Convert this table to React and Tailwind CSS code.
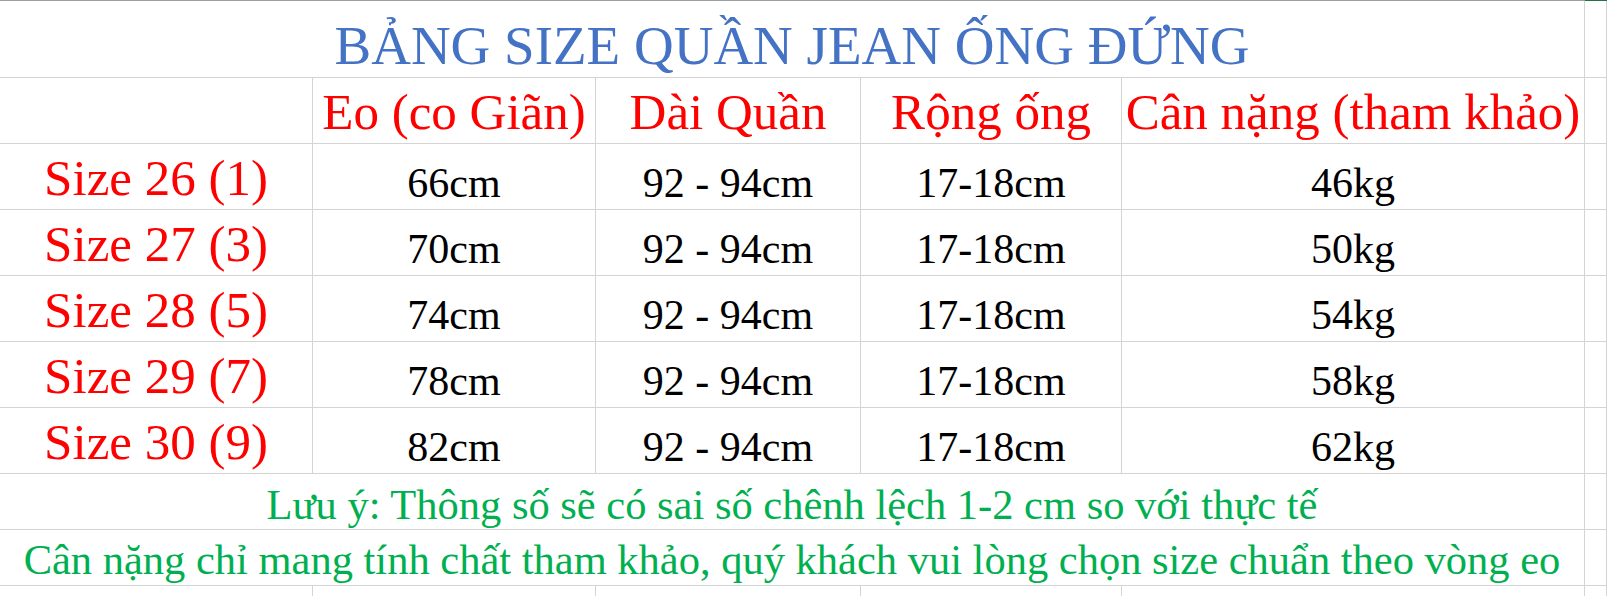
import React from 'react';

// Excel-style size chart, Times New Roman widths via Liberation Serif
const ROWS = [
  { size: 'Size 26 (1)', eo: '66cm', kg: '46kg' },
  { size: 'Size 27 (3)', eo: '70cm', kg: '50kg' },
  { size: 'Size 28 (5)', eo: '74cm', kg: '54kg' },
  { size: 'Size 29 (7)', eo: '78cm', kg: '58kg' },
  { size: 'Size 30 (9)', eo: '82cm', kg: '62kg' },
];

const cell = 'border-r border-b border-[#d4d4d4] flex items-end justify-center leading-none whitespace-nowrap';

export default function App() {
  return (
    <div className="w-[1607px] h-[596px] overflow-hidden bg-white" style={{ fontFamily: '"Liberation Serif", "Times New Roman", serif' }}>
      {/* top header edge */}
      <div className="flex h-px">
        <div className="flex-1 bg-[#9e9e9e]" />
        <div className="w-[22px] bg-[#217346]" />
      </div>

      <div className="grid grid-cols-[313px_283px_265px_261px_463px_1fr]">
        {/* title */}
        <div className={`${cell} col-span-5 h-[77px] pb-[4px] text-[55px] text-[#4472c4]`}>
          BẢNG SIZE QUẦN JEAN ỐNG ĐỨNG
        </div>
        <div className={`${cell} h-[77px]`} />

        {/* header */}
        <div className={`${cell} h-[66px]`} />
        {['Eo (co Giãn)', 'Dài Quần', 'Rộng ống', 'Cân nặng (tham khảo)'].map((h) => (
          <div key={h} className={`${cell} h-[66px] pb-[5px] text-[51px] text-[#ff0000]`}>
            {h}
          </div>
        ))}
        <div className={`${cell} h-[66px]`} />

        {/* data rows */}
        {ROWS.map((r) => (
          <React.Fragment key={r.size}>
            <div className={`${cell} h-[66px] pb-[5px] text-[51px] text-[#ff0000]`}>{r.size}</div>
            <div className={`${cell} h-[66px] pb-[5px] text-[42px] text-black`}>{r.eo}</div>
            <div className={`${cell} h-[66px] pb-[5px] text-[42px] text-black`}>92 - 94cm</div>
            <div className={`${cell} h-[66px] pb-[5px] text-[42px] text-black`}>17-18cm</div>
            <div className={`${cell} h-[66px] pb-[5px] text-[42px] text-black`}>{r.kg}</div>
            <div className={`${cell} h-[66px]`} />
          </React.Fragment>
        ))}

        {/* notes */}
        <div className={`${cell} col-span-5 h-[56px] pb-[3px] text-[42.5px] text-[#00b050]`}>
          Lưu ý: Thông số sẽ có sai số chênh lệch 1-2 cm so với thực tế
        </div>
        <div className={`${cell} h-[56px]`} />
        <div className={`${cell} col-span-5 h-[56px] pb-[4px] text-[42.5px] text-[#00b050]`}>
          Cân nặng chỉ mang tính chất tham khảo, quý khách vui lòng chọn size chuẩn theo vòng eo
        </div>
        <div className={`${cell} h-[56px]`} />

        {/* partial row */}
        {[0, 1, 2, 3, 4, 5].map((i) => (
          <div key={i} className={`${cell} h-[40px]`} />
        ))}
      </div>
    </div>
  );
}
